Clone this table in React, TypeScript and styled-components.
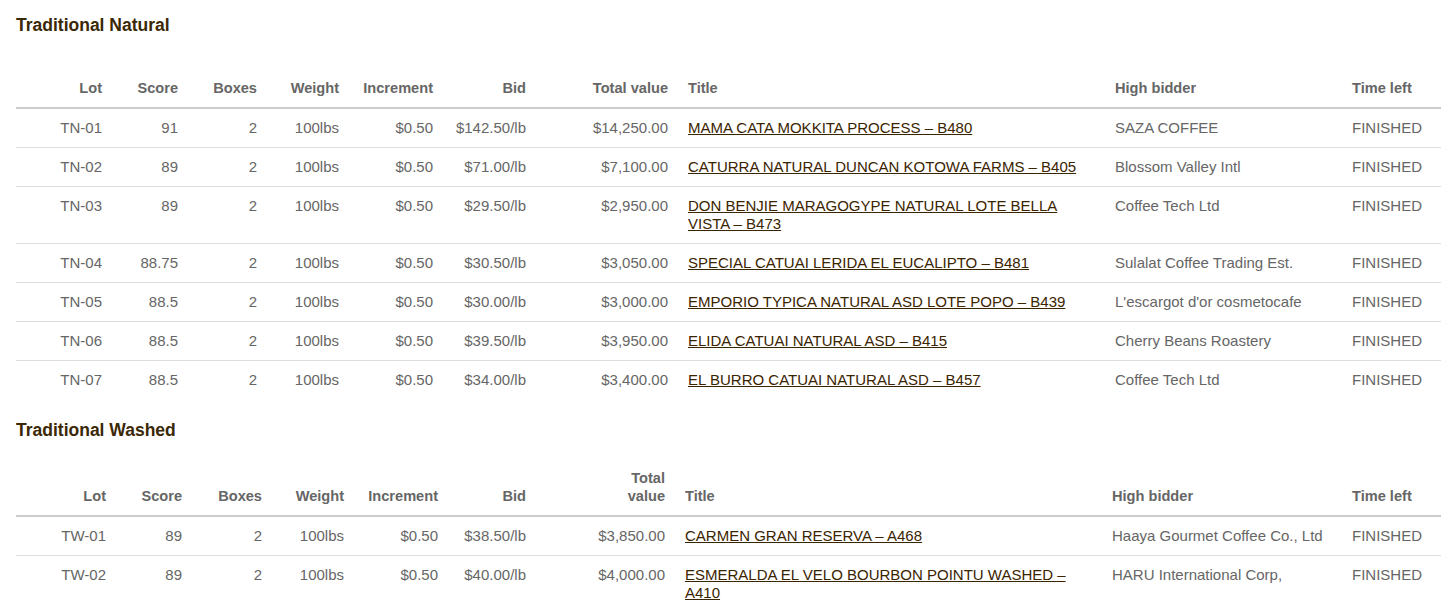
import React from "react";
import styled, { createGlobalStyle } from "styled-components";

const GlobalStyle = createGlobalStyle`
  body {
    margin: 0;
    background: #fff;
    font-family: "Liberation Sans", Arial, sans-serif;
  }
`;

const Page = styled.div`
  display: flex;
  flex-direction: column;
  gap: 22px;
  padding: 16px 14px 0 16px;
`;

const Section = styled.section`
  display: flex;
  flex-direction: column;
  gap: 20px;
`;

const Heading = styled.h3`
  margin: 0;
  font-size: 17.5px;
  line-height: 18px;
  font-weight: bold;
  color: #3b2805;
`;

const Table = styled.table`
  width: 100%;
  border-collapse: collapse;
  table-layout: fixed;
  font-size: 15px;
  line-height: 18px;
  color: #666;
`;

const HeadCell = styled.th<{ $align: string }>`
  height: 33px;
  padding: 10px;
  vertical-align: bottom;
  text-align: ${(p) => p.$align};
  font-size: 14.6px;
  font-weight: bold;
  color: #666;
  border-bottom: 2px solid #ccc;
`;

const Label = styled.span<{ $wrap?: boolean }>`
  display: ${(p) => (p.$wrap ? "inline-block" : "inline")};
  width: ${(p) => (p.$wrap ? "min-content" : "auto")};
`;

const Row = styled.tr`
  & + & {
    border-top: 1px solid #ddd;
  }
`;

const Cell = styled.td<{ $align: string }>`
  padding: 10px;
  vertical-align: top;
  text-align: ${(p) => p.$align};
`;

const TitleLink = styled.a`
  color: #3b2400;
  text-decoration: underline;
`;

type Lot = {
  lot: string;
  score: string;
  bid: string;
  total: string;
  title: string;
  bidder: string;
};

const columns = [
  { key: "Lot", align: "right" },
  { key: "Score", align: "right" },
  { key: "Boxes", align: "right" },
  { key: "Weight", align: "right" },
  { key: "Increment", align: "right" },
  { key: "Bid", align: "right" },
  { key: "Total value", align: "right" },
  { key: "Title", align: "left" },
  { key: "High bidder", align: "left" },
  { key: "Time left", align: "left" },
];

const natural: Lot[] = [
  { lot: "TN-01", score: "91", bid: "$142.50/lb", total: "$14,250.00", title: "MAMA CATA MOKKITA PROCESS – B480", bidder: "SAZA COFFEE" },
  { lot: "TN-02", score: "89", bid: "$71.00/lb", total: "$7,100.00", title: "CATURRA NATURAL DUNCAN KOTOWA FARMS – B405", bidder: "Blossom Valley Intl" },
  { lot: "TN-03", score: "89", bid: "$29.50/lb", total: "$2,950.00", title: "DON BENJIE MARAGOGYPE NATURAL LOTE BELLA VISTA – B473", bidder: "Coffee Tech Ltd" },
  { lot: "TN-04", score: "88.75", bid: "$30.50/lb", total: "$3,050.00", title: "SPECIAL CATUAI LERIDA EL EUCALIPTO – B481", bidder: "Sulalat Coffee Trading Est." },
  { lot: "TN-05", score: "88.5", bid: "$30.00/lb", total: "$3,000.00", title: "EMPORIO TYPICA NATURAL ASD LOTE POPO – B439", bidder: "L'escargot d'or cosmetocafe" },
  { lot: "TN-06", score: "88.5", bid: "$39.50/lb", total: "$3,950.00", title: "ELIDA CATUAI NATURAL ASD – B415", bidder: "Cherry Beans Roastery" },
  { lot: "TN-07", score: "88.5", bid: "$34.00/lb", total: "$3,400.00", title: "EL BURRO CATUAI NATURAL ASD – B457", bidder: "Coffee Tech Ltd" },
];

const washed: Lot[] = [
  { lot: "TW-01", score: "89", bid: "$38.50/lb", total: "$3,850.00", title: "CARMEN GRAN RESERVA – A468", bidder: "Haaya Gourmet Coffee Co., Ltd" },
  { lot: "TW-02", score: "89", bid: "$40.00/lb", total: "$4,000.00", title: "ESMERALDA EL VELO BOURBON POINTU WASHED – A410", bidder: "HARU International Corp," },
];

function AuctionTable({ lots, widths, wrapTotal }: { lots: Lot[]; widths: number[]; wrapTotal?: boolean }) {
  return (
    <Table>
      <colgroup>
        {widths.map((w, i) => (
          <col key={i} style={{ width: w }} />
        ))}
      </colgroup>
      <thead>
        <tr>
          {columns.map((c) => (
            <HeadCell key={c.key} $align={c.align}>
              <Label $wrap={wrapTotal && c.key === "Total value"}>{c.key}</Label>
            </HeadCell>
          ))}
        </tr>
      </thead>
      <tbody>
        {lots.map((l) => (
          <Row key={l.lot}>
            <Cell $align="right">{l.lot}</Cell>
            <Cell $align="right">{l.score}</Cell>
            <Cell $align="right">2</Cell>
            <Cell $align="right">100lbs</Cell>
            <Cell $align="right">$0.50</Cell>
            <Cell $align="right">{l.bid}</Cell>
            <Cell $align="right">{l.total}</Cell>
            <Cell $align="left">
              <TitleLink href="#">{l.title}</TitleLink>
            </Cell>
            <Cell $align="left">{l.bidder}</Cell>
            <Cell $align="left">FINISHED</Cell>
          </Row>
        ))}
      </tbody>
    </Table>
  );
}

export default function App() {
  return (
    <>
      <GlobalStyle />
      <Page>
        <Section>
          <Heading>Traditional Natural</Heading>
          <AuctionTable lots={natural} widths={[96, 76, 79, 82, 94, 93, 142, 427, 237, 99]} />
        </Section>
        <Section>
          <Heading>Traditional Washed</Heading>
          <AuctionTable lots={washed} widths={[100, 76, 80, 82, 94, 88, 139, 427, 240, 99]} wrapTotal />
        </Section>
      </Page>
    </>
  );
}
